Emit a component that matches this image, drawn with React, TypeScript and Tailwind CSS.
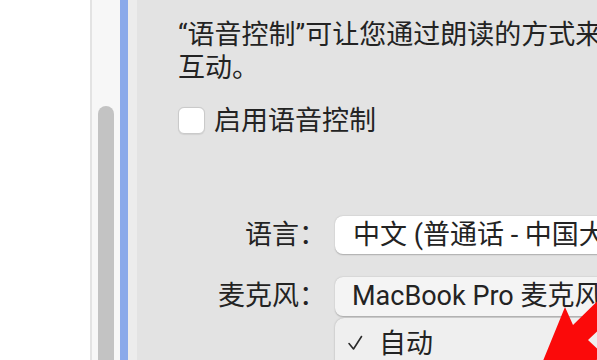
export default function App() {
  return (
    <div className="flex h-[360px] w-[597px] overflow-hidden bg-white font-['Roboto','Noto_Sans_CJK_SC',sans-serif] text-[#232323]">
      {/* left white area */}
      <div className="w-[90px] shrink-0 bg-white" />
      {/* sidebar with scrollbar */}
      <div className="flex w-[30px] shrink-0 border-l-2 border-[#e3e3e3] bg-[#f7f7f7] pl-[6px] pt-[106px]">
        <div className="h-full w-[16px] rounded-t-full bg-[#c3c3c3]" />
      </div>
      {/* focus edge */}
      <div className="w-[8px] shrink-0 bg-[#8aa9ea]" />
      <div className="w-[9px] shrink-0 bg-[#ececec]" />

      {/* main settings pane */}
      <div className="relative flex min-w-0 flex-1 flex-col overflow-hidden bg-[#e3e3e3] pl-[41px] pt-[19px]">
        <div className="whitespace-nowrap text-[27px] leading-[33px]">
          <div>“语音控制”可让您通过朗读的方式来控制 Mac 并与之</div>
          <div>互动。</div>
        </div>

        <div className="mt-[22px] flex h-[27px] items-center whitespace-nowrap">
          <div className="h-[27px] w-[27px] shrink-0 rounded-[6px] border border-[#cacaca] bg-white shadow-[0_0.5px_1px_rgba(0,0,0,0.08)]" />
          <span className="ml-[9px] mt-[2px] text-[27px] leading-none">启用语音控制</span>
        </div>

        <div className="mt-[82px] flex items-center whitespace-nowrap">
          <div className="w-[148px] shrink-0 text-right text-[27px] leading-none">语言：</div>
          <div className="ml-[9px] flex h-[38px] w-[420px] shrink-0 items-center rounded-[8px] bg-white pl-[18px] text-[27px] leading-none shadow-[0_0.5px_1.5px_rgba(0,0,0,0.25)]">
            中文 (普通话 - 中国大陆)
          </div>
        </div>

        <div className="mt-[23px] flex items-center whitespace-nowrap">
          <div className="w-[148px] shrink-0 text-right text-[27px] leading-none">麦克风：</div>
          <div className="ml-[9px] flex h-[39px] w-[420px] shrink-0 items-center rounded-[8px] bg-[#f4f4f4] pl-[17px] text-[27px] leading-none shadow-[0_0.5px_1.5px_rgba(0,0,0,0.25)]">
            MacBook Pro 麦克风
          </div>
        </div>

        {/* open menu */}
        <div className="ml-[157px] mt-[2px] flex h-[60px] w-[420px] shrink-0 items-start rounded-t-[9px] bg-[#efefef] pl-[12px] pt-[13px] shadow-[0_0_2px_rgba(0,0,0,0.25)]">
          <svg width="16" height="16" viewBox="0 0 16 16" className="mt-[4px]">
            <path d="M2 8.5 L6.5 14 L14.5 1.5" fill="none" stroke="#2a2a2a" strokeWidth="1.6" strokeLinecap="round" strokeLinejoin="round" />
          </svg>
          <span className="ml-[16px] text-[27px] leading-none">自动</span>
        </div>
      </div>

      {/* red annotation arrow */}
      <svg className="pointer-events-none absolute left-0 top-0" width="597" height="360" viewBox="0 0 597 360">
        <polygon points="536,378 565,307 573,325 612,287 627,303 588,340 606,357" fill="#fb0a0a" />
      </svg>
    </div>
  );
}
